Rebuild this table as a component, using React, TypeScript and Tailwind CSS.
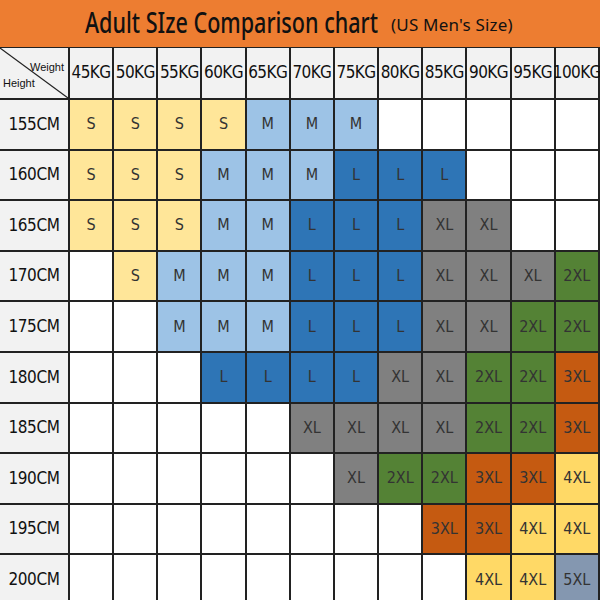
const weights = ["45KG", "50KG", "55KG", "60KG", "65KG", "70KG", "75KG", "80KG", "85KG", "90KG", "95KG", "100KG"];

const rows: { height: string; sizes: string[] }[] = [
  { height: "155CM", sizes: ["S", "S", "S", "S", "M", "M", "M", "", "", "", "", ""] },
  { height: "160CM", sizes: ["S", "S", "S", "M", "M", "M", "L", "L", "L", "", "", ""] },
  { height: "165CM", sizes: ["S", "S", "S", "M", "M", "L", "L", "L", "XL", "XL", "", ""] },
  { height: "170CM", sizes: ["", "S", "M", "M", "M", "L", "L", "L", "XL", "XL", "XL", "2XL"] },
  { height: "175CM", sizes: ["", "", "M", "M", "M", "L", "L", "L", "XL", "XL", "2XL", "2XL"] },
  { height: "180CM", sizes: ["", "", "", "L", "L", "L", "L", "XL", "XL", "2XL", "2XL", "3XL"] },
  { height: "185CM", sizes: ["", "", "", "", "", "XL", "XL", "XL", "XL", "2XL", "2XL", "3XL"] },
  { height: "190CM", sizes: ["", "", "", "", "", "", "XL", "2XL", "2XL", "3XL", "3XL", "4XL"] },
  { height: "195CM", sizes: ["", "", "", "", "", "", "", "", "3XL", "3XL", "4XL", "4XL"] },
  { height: "200CM", sizes: ["", "", "", "", "", "", "", "", "", "4XL", "4XL", "5XL"] },
];

const sizeColors: Record<string, string> = {
  S: "bg-[#ffe699]",
  M: "bg-[#9dc3e6]",
  L: "bg-[#2e75b6]",
  XL: "bg-[#808080]",
  "2XL": "bg-[#548235]",
  "3XL": "bg-[#c55a11]",
  "4XL": "bg-[#ffd966]",
  "5XL": "bg-[#8497b0]",
  "": "bg-white",
};

const condensed = { fontFamily: '"DejaVu Sans Condensed", "DejaVu Sans", sans-serif', fontStretch: "condensed" };

export default function App() {
  return (
    <div className="w-[600px] h-[600px] overflow-hidden bg-white" style={{ fontFamily: '"Noto Sans", "Liberation Sans", sans-serif' }}>
      <div className="h-[48px] bg-[#ed7d31] flex items-center pl-[85px] border-b border-[#222]">
        <div className="w-[306px] shrink-0">
          <span className="inline-block origin-left scale-x-[0.77] whitespace-nowrap text-[28px] font-medium text-[#111] leading-none">
            Adult SIze Comparison chart
          </span>
        </div>
        <span className="text-[17px] text-[#111] tracking-[0.2px] whitespace-nowrap mt-[2px]">(US Men's Size)</span>
      </div>

      <div className="grid grid-cols-[70px_repeat(12,44.17px)] grid-rows-[52px_repeat(10,50.6px)]">
        <div className="relative bg-[#f2f2f2] border-r-2 border-b-2 border-[#222]">
          <svg className="absolute inset-0 w-full h-full" viewBox="0 0 68 50" preserveAspectRatio="none">
            <line x1="0" y1="0" x2="68" y2="50" stroke="#222" strokeWidth="1.2" />
          </svg>
          <span className="absolute right-[4px] top-[11px] text-[11px] text-[#111]" style={{ fontFamily: '"Liberation Sans", sans-serif' }}>Weight</span>
          <span className="absolute left-[3px] top-[27px] text-[11px] text-[#111]" style={{ fontFamily: '"Liberation Sans", sans-serif' }}>Height</span>
        </div>
        {weights.map((w) => (
          <div
            key={w}
            className="bg-[#f2f2f2] border-r-2 border-b-2 border-[#222] flex items-center justify-center text-[17px] text-[#111] tracking-[-0.6px] whitespace-nowrap"
            style={condensed}
          >
            {w}
          </div>
        ))}

        {rows.map((row) => (
          <>
            <div
              key={row.height}
              className="bg-[#f2f2f2] border-r-2 border-b-2 border-[#222] flex items-center justify-center text-[17px] text-[#111] tracking-[-0.4px]"
              style={condensed}
            >
              {row.height}
            </div>
            {row.sizes.map((s, i) => (
              <div
                key={row.height + i}
                className={`${sizeColors[s]} border-r-2 border-b-2 border-[#222] flex items-center justify-center text-[16px] text-[#333]`}
                style={condensed}
              >
                {s}
              </div>
            ))}
          </>
        ))}
      </div>
    </div>
  );
}
